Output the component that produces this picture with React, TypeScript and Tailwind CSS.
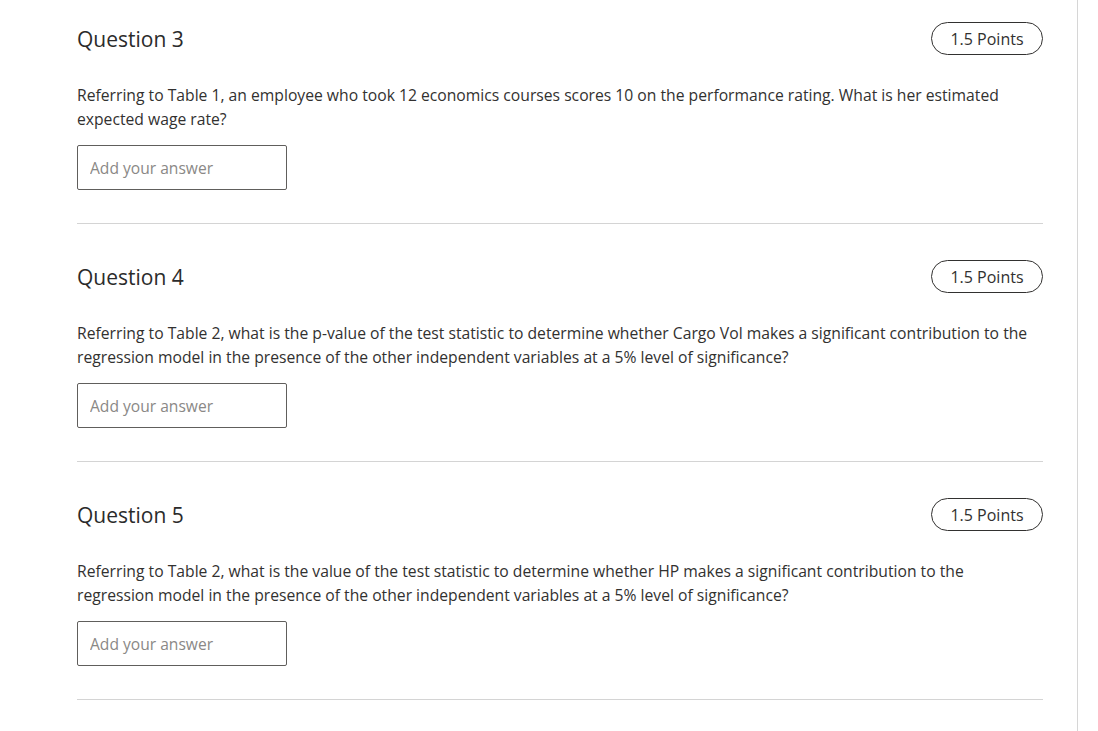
const questions = [
  {
    num: 3,
    text: "Referring to Table 1, an employee who took 12 economics courses scores 10 on the performance rating. What is her estimated expected wage rate?",
  },
  {
    num: 4,
    text: "Referring to Table 2, what is the p-value of the test statistic to determine whether Cargo Vol makes a significant contribution to the regression model in the presence of the other independent variables at a 5% level of significance?",
  },
  {
    num: 5,
    text: "Referring to Table 2, what is the value of the test statistic to determine whether HP makes a significant contribution to the regression model in the presence of the other independent variables at a 5% level of significance?",
  },
];

export default function App() {
  return (
    <div
      className="min-h-screen w-full bg-white text-[#323130]"
      style={{ fontFamily: '"Open Sans", "Noto Sans", sans-serif' }}
    >
      <div className="w-[1078px] min-h-[731px] border-r border-[#d6d6d6] pl-[77px] pr-[34px]">
        {questions.map((q, i) => (
          <section
            key={q.num}
            className={`border-b border-[#d4d4d4] pb-[33px] ${i === 0 ? "pt-[22px]" : "pt-[36px]"}`}
          >
            <div className="flex h-[33px] items-center justify-between">
              <h2 className="pt-[2px] text-[21px] font-medium leading-none text-[#2b2b2b]">Question {q.num}</h2>
              <span className="flex h-[33px] w-[112px] items-center justify-center rounded-full border border-[#323130] text-[16px]">
                1.5 Points
              </span>
            </div>
            <p className="mt-[28px] text-[15.7px] leading-6">{q.text}</p>
            <input
              type="text"
              placeholder="Add your answer"
              className="mt-[14px] block h-[45px] w-[210px] rounded-[2px] border border-[#605e5c] px-3 text-[15.6px] placeholder:text-[#8a8886] outline-none"
            />
          </section>
        ))}
      </div>
    </div>
  );
}
